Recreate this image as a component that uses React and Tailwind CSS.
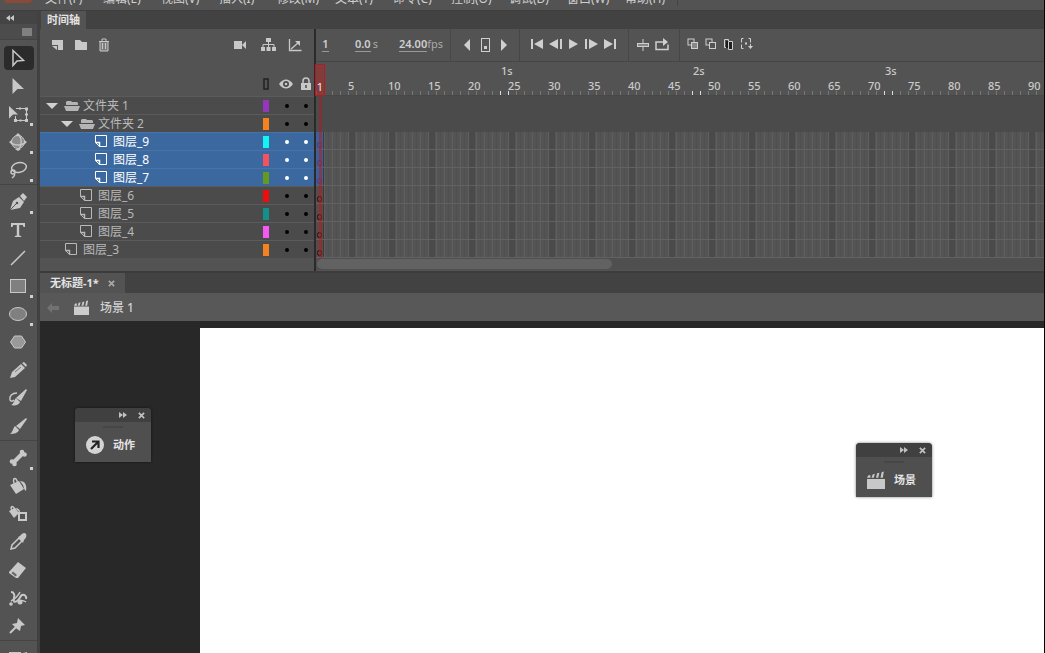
import { useState } from "react";

const MENUS = [
  "文件(F)",
  "编辑(E)",
  "视图(V)",
  "插入(I)",
  "修改(M)",
  "文本(T)",
  "命令(C)",
  "控制(O)",
  "调试(D)",
  "窗口(W)",
  "帮助(H)",
];

const LAYERS = [
  { name: "文件夹 1", type: "folder", indent: "pl-1", color: "bg-[#9537bd]" },
  { name: "文件夹 2", type: "folder", indent: "pl-[19px]", color: "bg-[#f58220]" },
  { name: "图层_9", indent: "pl-[34px]", color: "bg-[#12f5f5]", selected: true },
  { name: "图层_8", indent: "pl-[34px]", color: "bg-[#f5525f]", selected: true },
  { name: "图层_7", indent: "pl-[34px]", color: "bg-[#639a20]", selected: true },
  { name: "图层_6", indent: "pl-[19px]", color: "bg-[#ee0c0c]" },
  { name: "图层_5", indent: "pl-[19px]", color: "bg-[#139088]" },
  { name: "图层_4", indent: "pl-[19px]", color: "bg-[#f558f5]" },
  { name: "图层_3", indent: "pl-1", color: "bg-[#f58220]" },
];

const FRAME_LABELS = Array.from({ length: 18 }, (_, i) => (i + 1) * 5);
const SECONDS = [1, 2, 3];

const Svg = ({ w = 20, h = 20, children, className = "" }) => (
  <svg
    width={w}
    height={h}
    viewBox={`0 0 ${w} ${h}`}
    fill="currentColor"
    aria-hidden="true"
    className={`shrink-0 ${className}`}
  >
    {children}
  </svg>
);

const line = { fill: "none", stroke: "currentColor", strokeWidth: 1.5 };

/* ---------- tool glyphs, 20x20 ---------- */

const TOOLS = [
  [
    { name: "选择工具", icon: <path d="M5 2.500l10.500 10l-6.500 .5l-4 4.500z" {...line} /> },
    { name: "部分选取工具", icon: <path d="M4.500 2l11.500 11h-6.500l-5 5z" /> },
    {
      name: "任意变形工具",
      more: true,
      icon: (
        <>
          <path d="M8 4.500h11M7 16.500h12M18.500 5v11M7.500 12v4" fill="none" stroke="currentColor" />
          <path d="M1 2l9 8.500h-5l-4 4z" />
          <path d="M11 3.500h2v2h-2zM17 3.500h3v3h-3zM17 9.500h3v2h-3zM17 15h3v3h-3zM11.500 15.500h2v2h-2zM6 15h3v3h-3z" />
        </>
      ),
    },
    {
      name: "3D 旋转工具",
      more: true,
      icon: (
        <>
          <circle cx="10" cy="10" r="6.500" fill="#8a8a8a" stroke="currentColor" />
          <path d="M2 10c4 4 12 4 16 0M11 3c3 4 3 10 0 14" fill="none" stroke="currentColor" strokeWidth="1.300" />
          <path d="M10 1l3 3h-6zM10 19l3-2h-6zM1 10l3-2v4zM19 10l-3-2v4z" />
        </>
      ),
    },
    {
      name: "套索工具",
      more: true,
      icon: (
        <>
          <ellipse cx="11" cy="7.500" rx="7.500" ry="4.800" transform="rotate(-12 11 7.500)" {...line} />
          <circle cx="5" cy="12" r="2" {...line} />
          <path d="M6 13q2 2-2 5" {...line} />
        </>
      ),
    },
  ],
  [
    {
      name: "钢笔工具",
      more: true,
      icon: (
        <>
          <path d="M2 18l3-9l6-4l5 5l-4 6z" />
          <path d="M12 4l3-3l4 4l-3 4z" />
          <path d="M2 18l6-6" stroke="#535353" />
          <circle cx="9" cy="11" r="1.300" fill="#535353" />
        </>
      ),
    },
    { name: "文本工具", icon: <path d="M3 3h14v4h-1.500l-.8-2h-3.500v10.500l2 .5v1h-6.400v-1l2-.5v-10.500h-3.500l-.8 2h-1.500z" /> },
    { name: "线条工具", icon: <path d="M3 17l14-14" {...line} /> },
    { name: "矩形工具", more: true, icon: <rect x="2.500" y="3.500" width="15" height="13" fill="#808080" stroke="currentColor" /> },
    { name: "椭圆工具", more: true, icon: <ellipse cx="10" cy="10" rx="8.500" ry="6.500" fill="#808080" stroke="currentColor" /> },
    { name: "多角星形工具", icon: <path d="M6.500 4h7l4 6l-4 6h-7l-4-6z" fill="#999" stroke="currentColor" /> },
    {
      name: "铅笔工具",
      icon: (
        <>
          <path d="M2 18l2-6l9-8l4 4l-10 9z" />
          <path d="M14 3l2-1l3 3l-1 2z" />
          <path d="M7 12l6-5" stroke="#7a7a7a" />
        </>
      ),
    },
    {
      name: "画笔工具",
      icon: (
        <>
          <path d="M18 1l1 1l-6 11l-5-3z" />
          <path d="M8 10l4 4c-1 3-5 4-9 3c3-1 3-5 5-7z" />
          <path d="M9 5c-5 0-8 3-7 7c1 2 3 1 4 0" {...line} />
        </>
      ),
    },
    {
      name: "刷子工具",
      icon: (
        <>
          <path d="M18 2l1 1l-7 10l-4-3z" />
          <path d="M7 10l4 4c-1 3-5 4-9 4c3-2 3-6 5-8z" />
        </>
      ),
    },
  ],
  [
    {
      name: "骨骼工具",
      more: true,
      icon: (
        <>
          <path d="M5 15l10-10" stroke="currentColor" strokeWidth="4" />
          <circle cx="14" cy="4" r="2.300" />
          <circle cx="16.500" cy="6.500" r="2.300" />
          <circle cx="4" cy="13.500" r="2.300" />
          <circle cx="6.500" cy="16" r="2.300" />
        </>
      ),
    },
    {
      name: "颜料桶工具",
      icon: (
        <>
          <path d="M2 9l9-4l5 8l-8 5z" />
          <path d="M7 9c-3-4-1-8 1-6l3 6" {...line} />
          <path d="M12 5c5 0 7 4 6 10c-2-1-2-4-3-6z" />
        </>
      ),
    },
    {
      name: "墨水瓶工具",
      icon: (
        <>
          <path d="M1 7l6-3l4 5l-5 5z" />
          <path d="M4 6c-2-3 0-5 2-2l2 4" {...line} />
          <path d="M7 4c4 0 5 2 5 5z" />
          <rect x="11" y="9" width="7" height="7" fill="#535353" stroke="currentColor" strokeWidth="2" />
        </>
      ),
    },
    {
      name: "滴管工具",
      icon: (
        <>
          <path d="M3 17l1-4l7-7l3 3l-7 7z" {...line} />
          <path d="M10 5l2-1c2-3 5-4 6-2s0 4-2 6l-1 3z" />
        </>
      ),
    },
    {
      name: "橡皮擦工具",
      icon: (
        <>
          <path d="M1 12l9-10l8 6l-8 10h-2l-7-5z" />
          <path d="M3.500 13l4 3.500l1.500-1.500l-4-3.500z" fill="#666" />
        </>
      ),
    },
    {
      name: "宽度工具",
      icon: (
        <>
          <path d="M3 4c3 0 4 3 3 6s0 5 3 3s3-5 5-6s5 1 4 4" {...line} strokeWidth="2" />
          <path d="M3 13c4-2 7-5 9-9M10 14c2-2 5-2 8 0" {...line} />
          <circle cx="3" cy="16" r="1.800" />
          <circle cx="12" cy="14" r="2.500" />
        </>
      ),
    },
    {
      name: "图钉工具",
      icon: (
        <>
          <path d="M10 2l7 7l-4 1l-1 5l-3-2l-5-5l5-1z" />
          <path d="M2 17l6-6" {...line} strokeWidth="2" />
        </>
      ),
    },
  ],
  [{ name: "资源变形工具", icon: <path d="M1 4h12v8h-12zM15 5l4-1v8h-4z" /> }],
];

/* ---------- small icons ---------- */

const FolderOpen = () => (
  <Svg w={16} h={12} className="text-[#b4b4b4]">
    <path d="M2 5v-3l1-1h4l1 1h5l1 1v2z" />
    <path d="M0 6h16l-2 5h-12z" />
  </Svg>
);

const LayerIcon = () => (
  <Svg w={13} h={13} className="ml-px">
    <path d="M.5 .5h11v11h-7l-4-4z" fill="none" stroke="currentColor" />
    <path d="M.5 7.500h4v4" fill="none" stroke="currentColor" strokeWidth="1.500" />
  </Svg>
);

const Clapper = ({ size = 16 }) => (
  <svg width={size} height={size} viewBox="0 0 16 16" fill="currentColor" aria-hidden="true" className="shrink-0">
    <path d="M0 7h16v9h-16z" />
    <path d="M0 6l1-2l2-.500v2.500zM4 6l1-3l2-.500l-1 3.500zM8 6l1-4l2-.500l-1 4.500zM12 6l1-5l2-.500l-1 5.500z" />
  </svg>
);

const Close = ({ size = 8 }) => (
  <svg width={size} height={size} viewBox="0 0 8 8" fill="none" stroke="currentColor" strokeWidth="2" aria-hidden="true">
    <path d="M1 1l6 6M7 1l-6 6" />
  </svg>
);

const Chevrons = ({ flip }) => (
  <svg
    width="8"
    height="6"
    viewBox="0 0 8 6"
    fill="currentColor"
    aria-hidden="true"
    className={flip ? "rotate-180" : ""}
  >
    <path d="M0 0l4 3l-4 3zM4 0l4 3l-4 3z" />
  </svg>
);

const IconButton = ({ label, className = "", children }) => (
  <button type="button" aria-label={label} className={`flex shrink-0 items-center justify-center ${className}`}>
    {children}
  </button>
);

/* ---------- panels ---------- */

function MenuBar() {
  return (
    <nav className="flex h-[10px] shrink-0 items-end gap-[18px] overflow-hidden bg-[#535353] pb-1 text-xs leading-[14px]">
      <span className="ml-1 -mr-[5px] h-[3px] w-7 self-start rounded-b-sm bg-[#8a4a38]"></span>
      {MENUS.map((m) => (
        <button key={m} type="button" className="w-10 shrink-0 text-left whitespace-nowrap">
          {m}
        </button>
      ))}
      <span className="-ml-[6px] h-3 w-px bg-[#444]"></span>
    </nav>
  );
}

function Toolbar() {
  const [active, setActive] = useState("选择工具");

  return (
    <aside className="flex w-10 shrink-0 flex-col overflow-hidden border-r-3 border-[#414141] bg-[#535353] text-[#c8c8c8]">
      <div className="flex h-[13px] shrink-0 items-center bg-[#444] pl-[6px]">
        <Chevrons flip />
      </div>
      <div className="flex h-4 shrink-0 items-center justify-end border-b border-[#444] bg-[#4c4c4c] pr-[5px]">
        <span className="h-2 w-[10px] bg-[#808080]"></span>
      </div>
      <div className="pt-1">
        {TOOLS.map((group, i) => (
          <div key={i} className="mb-[3px] border-b border-[#454545]">
            {group.map((t) => (
              <button
                key={t.name}
                type="button"
                aria-label={t.name}
                onClick={() => setActive(t.name)}
                className="flex h-7 w-full items-center justify-center"
              >
                <span
                  className={`relative flex h-6 w-[30px] items-center justify-center rounded-sm pr-px ${
                    active === t.name ? "bg-[#2b2b2b]" : ""
                  }`}
                >
                  <Svg>{t.icon}</Svg>
                  {t.more && <span className="absolute right-px bottom-0 size-[3px] bg-[#d0d0d0]"></span>}
                </span>
              </button>
            ))}
          </div>
        ))}
      </div>
    </aside>
  );
}

function LayerRow({ layer }) {
  const dot = layer.selected ? "bg-white" : "bg-black";

  return (
    <li
      className={`flex h-[18px] items-center border-t ${
        layer.selected
          ? "border-[#4674a8] bg-[#3b699f] text-white"
          : "border-[#5b5b5b] bg-[#4b4b4b] text-[#b9b9b9]"
      }`}
    >
      <div className={`flex min-w-0 flex-1 items-center ${layer.indent}`}>
        <span className="flex w-5 shrink-0 items-center pl-0.5">
          {layer.type === "folder" && (
            <Svg w={12} h={6} className="text-[#d0d0d0]">
              <path d="M0 0h12l-6 6z" />
            </Svg>
          )}
        </span>
        <span className="flex w-[19px] shrink-0 items-center">
          {layer.type === "folder" ? <FolderOpen /> : <LayerIcon />}
        </span>
        <span className="truncate text-xs leading-4">{layer.name}</span>
      </div>
      <span className={`mr-4 h-3 w-[6px] ${layer.color}`}></span>
      <button type="button" aria-label={`${layer.name} 可见`} className={`mr-[15px] size-1 rounded-full ${dot}`} />
      <button type="button" aria-label={`${layer.name} 锁定`} className={`mr-[6px] size-1 rounded-full ${dot}`} />
    </li>
  );
}

function LayerPane() {
  return (
    <div className="w-[276px] shrink-0 border-r-2 border-[#2a2a2a]">
      <div className="flex h-[33px] items-center pr-3 pb-px pl-3 text-[#c8c8c8]">
        <IconButton label="新建图层" className="mr-[11px]">
          <Svg w={12} h={12}>
            <path d="M0 1h11v10h-5v-5h-6z" />
            <path d="M0 7h5v4z" />
          </Svg>
        </IconButton>
        <IconButton label="新建文件夹" className="mr-[11px]">
          <Svg w={12} h={12}>
            <path d="M0 1h5l2 2h5v8h-12z" />
          </Svg>
        </IconButton>
        <IconButton label="删除">
          <Svg w={12} h={14}>
            <path d="M2 4h8v9h-8z" fill="#7c7c7c" />
            <path d="M1 3.500h10M4 3v-2h4v2M2 4v9h8v-9M4.500 5v6M7.500 5v6" fill="none" stroke="currentColor" />
          </Svg>
        </IconButton>
        <IconButton label="添加摄像头" className="mr-[14px] ml-auto">
          <Svg w={13} h={12}>
            <path d="M0 2h8v8h-8zM8 6l4-4v8z" />
          </Svg>
        </IconButton>
        <IconButton label="显示父级视图" className="mr-3">
          <Svg w={15} h={14}>
            <path d="M5 0h5v4h-5zM0 9h4v4h-4zM5.500 9h4v4h-4zM11 9h4v4h-4z" />
            <path d="M7.500 4v5M2 9v-2.500h11v2.500" fill="none" stroke="currentColor" />
          </Svg>
        </IconButton>
        <IconButton label="图层深度">
          <Svg w={14} h={14}>
            <path d="M1.500 1v11.500h12M3 11l7-6" fill="none" stroke="currentColor" strokeWidth="1.300" />
            <path d="M7 3h5v5z" />
          </Svg>
        </IconButton>
      </div>
      <div className="flex h-[34px] items-end justify-end gap-2 pr-[3px] pb-[5px] text-[#c8c8c8]">
        <IconButton label="显示轮廓" className="mr-[2px]">
          <Svg w={6} h={13} className="text-[#222]">
            <rect x="1" y="1" width="4" height="10" {...line} />
          </Svg>
        </IconButton>
        <IconButton label="显示或隐藏所有图层">
          <Svg w={14} h={13}>
            <path d="M0 6c4-6 10-6 14 0c-4 6-10 6-14 0z" />
            <circle cx="7" cy="6" r="3" fill="#4a4a4a" />
            <circle cx="7" cy="6" r="1.300" />
          </Svg>
        </IconButton>
        <IconButton label="锁定所有图层">
          <Svg w={10} h={14}>
            <path d="M0 6h10v7h-10z" />
            <path d="M2 7v-3a3 3 0 0 1 6 0v3" {...line} />
            <path d="M4.300 8h1.400v3h-1.400z" fill="#444" />
          </Svg>
        </IconButton>
      </div>
      <ul>
        {LAYERS.map((l) => (
          <LayerRow key={l.name} layer={l} />
        ))}
      </ul>
    </div>
  );
}

const Group = ({ className = "", children }) => (
  <div className={`flex h-full shrink-0 items-center border-r border-[#474747] ${className}`}>{children}</div>
);

function PlaybackBar() {
  return (
    <div className="flex h-[33px] items-center border-b border-[#464646] text-[11px] leading-[14px] text-[#cfcfcf]">
      <Group className="w-[135px] pb-0.5 pl-[6px]">
        <button type="button" className="mr-[26px] w-[7px] border-b border-[#999] font-semibold">
          1
        </button>
        <button type="button" className="mr-[23px] flex w-[21px] gap-0.5 whitespace-nowrap">
          <span className="border-b border-[#999] font-semibold">0.0</span>
          <span className="text-[#aaa]">s</span>
        </button>
        <button type="button" className="flex">
          <span className="border-b border-[#999] font-semibold">24.00</span>
          <span className="text-[#aaa]">fps</span>
        </button>
      </Group>
      <Group className="w-[69px] gap-[10px] pb-px pl-3">
        <IconButton label="后退到上一关键帧">
          <Svg w={8} h={12}>
            <path d="M7 0v12l-6-6z" />
          </Svg>
        </IconButton>
        <IconButton label="插入关键帧">
          <Svg w={9} h={14}>
            <rect x=".5" y=".5" width="8" height="13" fill="none" stroke="currentColor" />
            <path d="M3 8h3v3h-3z" />
          </Svg>
        </IconButton>
        <IconButton label="前进到下一关键帧">
          <Svg w={8} h={12}>
            <path d="M1 0v12l6-6z" />
          </Svg>
        </IconButton>
      </Group>
      <Group className="w-[109px] gap-[5px] pb-0.5 pl-[11px]">
        <IconButton label="转到第一帧">
          <Svg w={13} h={10}>
            <path d="M0 0h2v10h-2zM12 0v10l-9-5z" />
          </Svg>
        </IconButton>
        <IconButton label="后退一帧">
          <Svg w={14} h={10}>
            <path d="M9 0v10l-9-5zM11 0h2v10h-2z" />
          </Svg>
        </IconButton>
        <IconButton label="播放">
          <Svg w={11} h={10}>
            <path d="M1 0v10l9-5z" />
          </Svg>
        </IconButton>
        <IconButton label="前进一帧">
          <Svg w={14} h={10}>
            <path d="M1 0h2v10h-2zM5 0v10l9-5z" />
          </Svg>
        </IconButton>
        <IconButton label="转到最后一帧">
          <Svg w={13} h={10}>
            <path d="M1 0v10l9-5zM11 0h2v10h-2z" />
          </Svg>
        </IconButton>
      </Group>
      <Group className="w-[51px] gap-[6px] pb-px pl-2">
        <IconButton label="帧居中">
          <Svg w={12} h={12}>
            <path d="M6 0v12" stroke="currentColor" />
            <rect x=".5" y="4.500" width="11" height="3" fill="#888" stroke="currentColor" />
          </Svg>
        </IconButton>
        <IconButton label="循环">
          <Svg w={14} h={13}>
            <path d="M4 4h-3v7.500h12v-5M1 4h8" {...line} />
            <path d="M8 0l5 4l-5 4z" />
          </Svg>
        </IconButton>
      </Group>
      <div className="flex shrink-0 items-center gap-[6px] pb-0.5 pl-[7px]">
        <IconButton label="绘图纸外观">
          <Svg w={12} h={12}>
            <rect x="1" y="1" width="6" height="6" fill="none" stroke="currentColor" />
            <rect x="4.500" y="4.500" width="6" height="6" fill="#888" stroke="currentColor" />
          </Svg>
        </IconButton>
        <IconButton label="绘图纸外观轮廓">
          <Svg w={12} h={12}>
            <rect x="1" y="1" width="6" height="6" fill="none" stroke="currentColor" />
            <rect x="4.500" y="4.500" width="6" height="6" fill="#535353" stroke="currentColor" />
          </Svg>
        </IconButton>
        <IconButton label="编辑多个帧">
          <Svg w={11} h={12}>
            <path d="M1.500 1.500h4v8h-4z" fill="none" stroke="currentColor" />
            <path d="M3 3h3v7h-3z" fill="#1c1c1c" />
            <path d="M5.500 3.500h4v8h-4z" fill="#222" stroke="currentColor" />
          </Svg>
        </IconButton>
        <IconButton label="修改标记">
          <Svg w={13} h={12}>
            <path d="M3.500 .5h-2v4M1.500 6.500v4h2M8.500 .5h2v4M10.500 6v2" fill="none" stroke="currentColor" />
            <path d="M5 4.500h2v2h-2zM8 8h5l-2.500 3z" />
          </Svg>
        </IconButton>
      </div>
    </div>
  );
}

function Ruler() {
  return (
    <div className="h-[34px] overflow-hidden border-b border-[#484848] bg-[repeating-linear-gradient(90deg,#ddd_0px_1px,transparent_1px_184px,#ddd_184px_185px,transparent_185px_192px),repeating-linear-gradient(90deg,#777_0px_1px,transparent_1px_8px)] bg-[length:100%_4px] bg-[position:0_29px] bg-no-repeat text-[11px] leading-[14px] font-medium text-[#cacaca]">
      <div className="flex h-[17px] pt-0.5 pl-[185px]">
        {SECONDS.map((s) => (
          <span key={s} className="w-48 shrink-0 last:w-auto">
            {s}s
          </span>
        ))}
      </div>
      <div className="flex pl-8">
        {FRAME_LABELS.map((n) => (
          <span key={n} className="w-10 shrink-0 last:w-auto">
            {n}
          </span>
        ))}
      </div>
    </div>
  );
}

function FrameRow({ layer }) {
  if (layer.type === "folder") {
    return <li className="h-[18px] bg-[#4b4b4b]"></li>;
  }
  return (
    <li className="h-[18px] border-b border-[#626262] bg-[#545454] bg-[repeating-linear-gradient(90deg,transparent_0px_33px,#4a4a4a_33px_39px,transparent_39px_40px),repeating-linear-gradient(90deg,#5f5f5f_0px_1px,transparent_1px_4px,#4f4f4f_4px_5px,transparent_5px_8px)]">
      <div
        className={`flex h-full w-2 items-end justify-center border-r border-[#3a3a3a] pb-px ${
          layer.selected ? "bg-[#3f5f98]" : "bg-[#5a4a4a]"
        }`}
      >
        <span
          className={`h-[6px] w-[5px] rounded-full border ${
            layer.selected ? "border-[#553672]" : "border-[#2a0a0a]"
          }`}
        ></span>
      </div>
    </li>
  );
}

function Timeline() {
  return (
    <section className="flex h-[244px] shrink-0 border-b-2 border-[#3c3c3c] bg-[#535353]">
      <LayerPane />
      <div className="relative min-w-0 flex-1">
        <PlaybackBar />
        <Ruler />
        <ul>
          {LAYERS.map((l) => (
            <FrameRow key={l.name} layer={l} />
          ))}
        </ul>
        <div className="h-3 bg-[#4f4f4f] p-px">
          <div className="h-[10px] w-[295px] rounded-full bg-[#626262]"></div>
        </div>
        {/* playhead */}
        <div className="absolute top-[35px] -left-px flex flex-col items-center">
          <div className="flex h-8 w-[10px] items-end justify-center border border-[#b01c20] bg-[#8a3838]/90 pb-px text-[11px] leading-[14px] text-[#eee]">
            1
          </div>
          <div className="ml-px h-[162px] w-[3px] bg-[#b01c20]/50"></div>
        </div>
      </div>
    </section>
  );
}

function FloatingPanel({ title, icon, className }) {
  return (
    <div className={`absolute w-[76px] overflow-hidden rounded-t-[4px] bg-[#4f4f4f] shadow-[0_0_3px_#0008] ${className}`}>
      <div className="flex h-[14px] items-center justify-end gap-[11px] bg-[#404040] pr-[6px] text-[#c0c0c0]">
        <Chevrons />
        <button type="button" aria-label={`关闭${title}`}>
          <Close size={7} />
        </button>
      </div>
      <div className="mx-auto mt-1 h-0.5 w-5 bg-[#464646]"></div>
      <button type="button" className="flex h-[34px] w-full items-center gap-[9px] pl-[11px] text-[#c8c8c8]">
        {icon}
        <span className="text-[11px] font-bold text-[#e4e4e4]">{title}</span>
      </button>
    </div>
  );
}

export default function App() {
  return (
    <div className="flex h-screen flex-col overflow-hidden border-r border-black bg-[#424242] font-['Noto_Sans','Noto_Sans_CJK_SC',sans-serif] text-[#d0d0d0]">
      <MenuBar />
      <div className="flex min-h-0 flex-1 border-t border-[#3e3e3e]">
        <Toolbar />
        <main className="flex min-w-0 flex-1 flex-col">
          <div className="flex h-[18px] shrink-0 pl-px">
            <button type="button" className="bg-[#535353] px-[6px] text-[11px] leading-[18px] font-bold text-[#e4e4e4]">
              时间轴
            </button>
          </div>
          <Timeline />
          <div className="flex h-5 shrink-0">
            <div className="flex items-center gap-[9px] bg-[#535353] pr-[10px] pl-[10px] text-[11px] leading-5 font-bold text-[#e4e4e4]">
              <button type="button">无标题-1*</button>
              <button type="button" aria-label="关闭文档" className="text-[#a8a8a8]">
                <Close size={7} />
              </button>
            </div>
          </div>
          <div className="flex h-7 shrink-0 items-center bg-[#585858] pt-px pl-[7px] text-xs">
            <IconButton label="返回" className="mr-[15px] text-[#727272]">
              <Svg w={12} h={10}>
                <path d="M0 5l5-5v3h7v4h-7v3z" />
              </Svg>
            </IconButton>
            <span className="mr-[11px] text-[#cccccc]">
              <Clapper size={15} />
            </span>
            <span className="font-medium">场景 1</span>
          </div>
          <div className="relative min-h-0 flex-1 bg-[#282828] pt-[7px] pl-40">
            <div className="h-full bg-white"></div>
            <FloatingPanel
              title="动作"
              className="top-[87px] left-[35px]"
              icon={
                <Svg w={18} h={18}>
                  <circle cx="9" cy="9" r="9" fill="#d4d4d4" />
                  <path d="M5 13l6.500-6.500M6 5.500h6.500v6.500" fill="none" stroke="#222" strokeWidth="2.200" />
                </Svg>
              }
            />
            <FloatingPanel title="场景" className="top-[122px] right-28" icon={<Clapper size={18} />} />
          </div>
        </main>
      </div>
    </div>
  );
}
